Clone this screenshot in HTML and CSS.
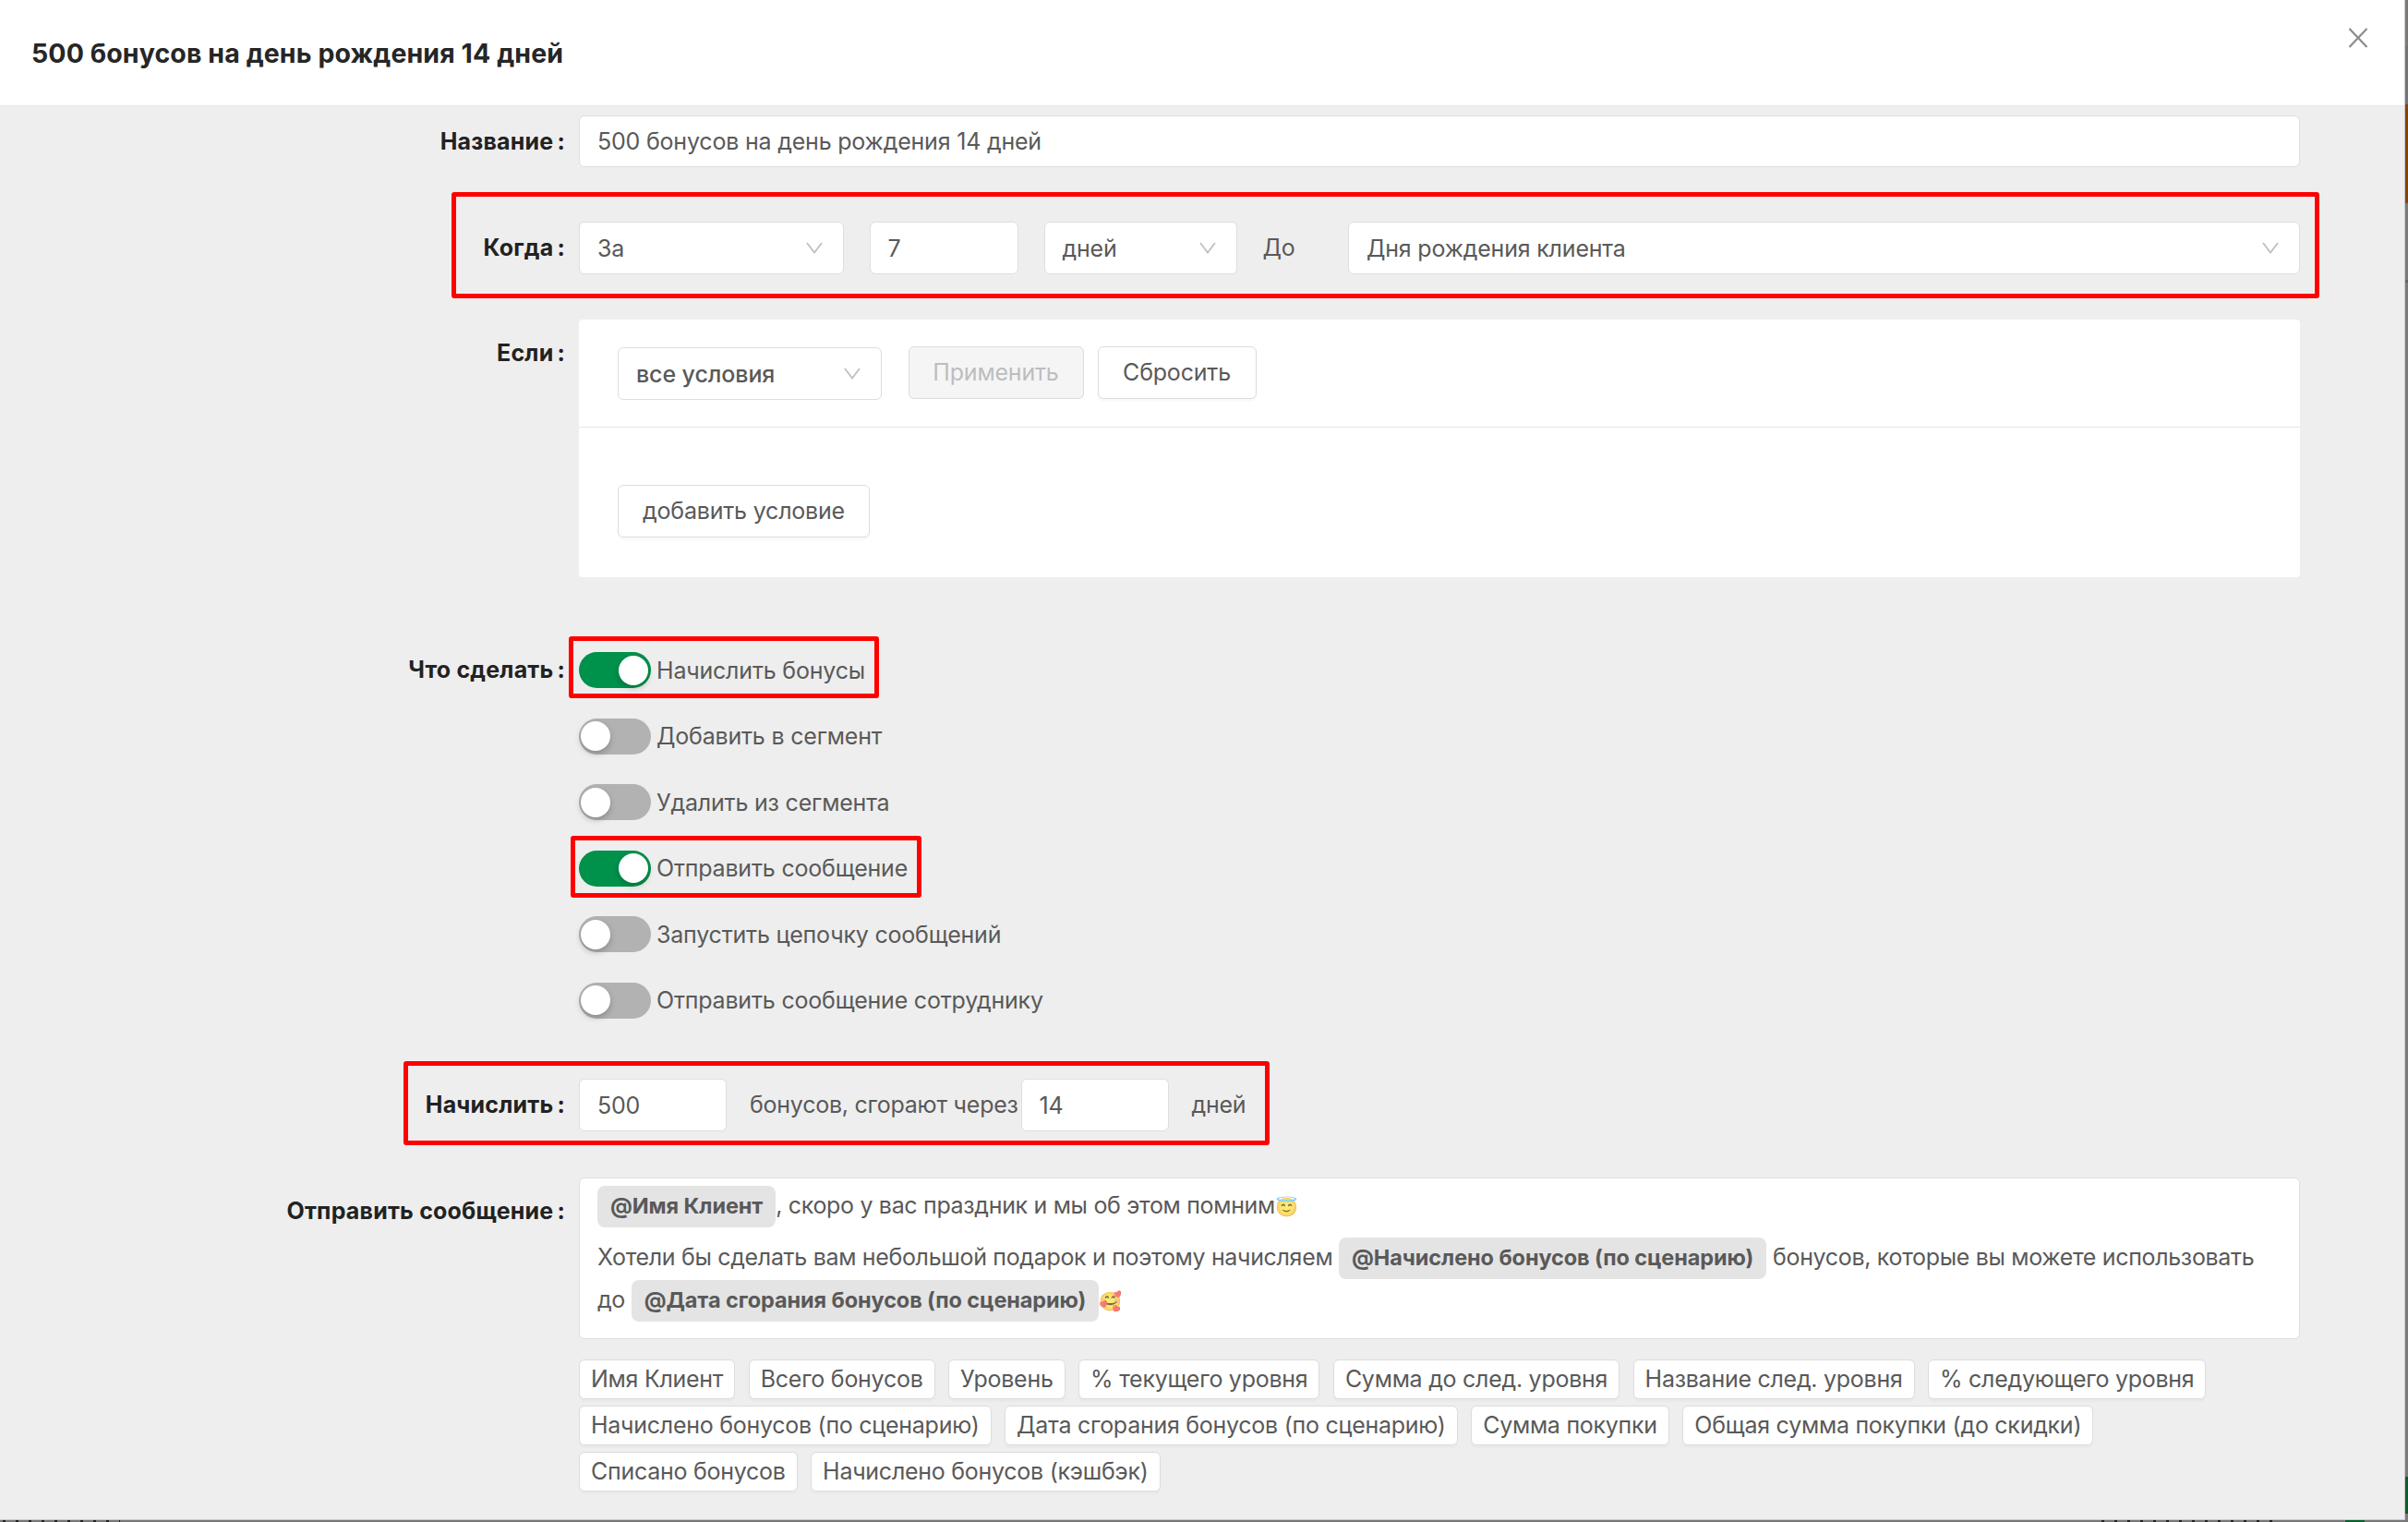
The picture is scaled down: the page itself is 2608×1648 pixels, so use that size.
FILE: index.html
```
<!DOCTYPE html>
<html lang="ru">

<head>
    <meta charset="utf-8">
    <title>500 бонусов на день рождения 14 дней</title>
    <link rel="stylesheet" href="styles.css">
</head>

<body>
    <svg class="sprite" width="0" height="0">
        <symbol id="down" viewBox="0 0 18 13">
            <path d="M1 1 L9 11.5 L17 1" fill="none" stroke="#bfbfbf" stroke-width="1.8" />
        </symbol>
    </svg>

    <div class="page">
        <div class="drawer">
            <div class="drawer-header">
                <h1>500 бонусов на день рождения 14 дней</h1>
                <svg class="close" width="22" height="22" viewBox="0 0 22 22">
                    <path d="M1.5 1 L20.5 21 M20.5 1 L1.5 21" fill="none" stroke="#8c8c8c" stroke-width="2.2" />
                </svg>
            </div>

            <div class="form">
                <div class="row row-name">
                    <div class="label">Название<i>:</i></div>
                    <div class="field input">500 бонусов на день рождения 14 дней</div>
                </div>

                <div class="row row-when">
                    <div class="label">Когда<i>:</i></div>
                    <div class="field when">
                        <div class="input">За<svg class="arrow"><use href="#down" /></svg></div>
                        <div class="input">7</div>
                        <div class="input">дней<svg class="arrow"><use href="#down" /></svg></div>
                        <div class="text">До</div>
                        <div class="input">Дня рождения клиента<svg class="arrow"><use href="#down" /></svg></div>
                    </div>
                    <div class="mark mark-when"></div>
                </div>

                <div class="row row-if">
                    <div class="label label-low">Если<i>:</i></div>
                    <div class="field panel">
                        <div class="panel-head">
                            <div class="input medium">все условия<svg class="arrow"><use href="#down" /></svg></div>
                            <div class="btn disabled">Применить</div>
                            <div class="btn reset">Сбросить</div>
                        </div>
                        <div class="panel-body">
                            <div class="btn add">добавить условие</div>
                        </div>
                    </div>
                </div>

                <div class="row row-do">
                    <div class="label">Что сделать<i>:</i></div>
                    <div class="field switches">
                        <div class="switch-line"><span class="switch on"></span>Начислить бонусы<div class="mark mark-bonus"></div></div>
                        <div class="switch-line"><span class="switch"></span>Добавить в сегмент</div>
                        <div class="switch-line"><span class="switch"></span>Удалить из сегмента</div>
                        <div class="switch-line"><span class="switch on"></span>Отправить сообщение<div class="mark mark-send"></div></div>
                        <div class="switch-line"><span class="switch"></span>Запустить цепочку сообщений</div>
                        <div class="switch-line"><span class="switch"></span>Отправить сообщение сотруднику</div>
                    </div>
                </div>

                <div class="row row-add">
                    <div class="label">Начислить<i>:</i></div>
                    <div class="field amount">
                        <div class="input">500</div>
                        <div class="text">бонусов, сгорают через</div>
                        <div class="input">14</div>
                        <div class="text">дней</div>
                    </div>
                    <div class="mark mark-add"></div>
                </div>

                <div class="row row-message">
                    <div class="label label-low">Отправить сообщение<i>:</i></div>
                    <div class="field">
                        <div class="message">
                            <p><span class="chip">@Имя Клиент</span>, скоро у вас праздник и мы об этом помним<span class="emoji">😇</span></p>
                            <p>Хотели бы сделать вам небольшой подарок и поэтому начисляем <span class="chip">@Начислено бонусов (по сценарию)</span> бонусов, которые вы можете использовать<br>до <span class="chip">@Дата сгорания бонусов (по сценарию)</span><span class="emoji">🥰</span></p>
                        </div>
                        <div class="tags">
                            <div class="btn small">Имя Клиент</div>
                            <div class="btn small">Всего бонусов</div>
                            <div class="btn small">Уровень</div>
                            <div class="btn small">% текущего уровня</div>
                            <div class="btn small">Сумма до след. уровня</div>
                            <div class="btn small">Название след. уровня</div>
                            <div class="btn small">% следующего уровня</div>
                            <div class="btn small">Начислено бонусов (по сценарию)</div>
                            <div class="btn small">Дата сгорания бонусов (по сценарию)</div>
                            <div class="btn small">Сумма покупки</div>
                            <div class="btn small">Общая сумма покупки (до скидки)</div>
                            <div class="btn small">Списано бонусов</div>
                            <div class="btn small">Начислено бонусов (кэшбэк)</div>
                        </div>
                    </div>
                </div>
            </div>
        </div>

        <!-- page edge behind the drawer -->
        <div class="edge">
            <div class="edge-top"></div>
            <div class="edge-orange"></div>
            <div class="edge-gray"></div>
            <div class="edge-green"></div>
        </div>
    </div>
    <div class="under">
        <span class="dots dots-left"></span>
        <span class="dots dots-right"></span>
        <span class="under-green"></span>
    </div>
</body>

</html>
```
FILE: styles.css
```
* {
    box-sizing: border-box;
}

body {
    margin: 0;
    width: 2608px;
    height: 1648px;
    overflow: hidden;
    background: #777;
    font-family: Inter, "Noto Sans", sans-serif;
    font-size: 25px;
    letter-spacing: -0.2px;
    color: #595959;
}

.sprite {
    position: absolute;
}

.page {
    display: flex;
    height: 1646px;
}

.drawer {
    flex: 1;
    background: #eee;
    border-right: 1px solid #c8c8c8;
    border-bottom: 1px solid #c8c8c8;
}

.drawer-header {
    display: flex;
    justify-content: space-between;
    height: 115px;
    padding: 0 39px 0 34px;
    background: #fff;
    border-bottom: 1px solid #e8e8e8;
}

h1 {
    margin: 0;
    font-size: 28.5px;
    font-weight: 650;
    line-height: 116px;
    letter-spacing: 0.1px;
    color: #262626;
}

.close {
    margin-top: 30px;
}

.form {
    padding-top: 10px;
}

.row {
    display: flex;
    position: relative;
}

.row-name {
    margin-bottom: 58px;
}

.row-when {
    margin-bottom: 49px;
}

.row-if {
    margin-bottom: 72px;
}

.row-do {
    margin-bottom: 33px;
}

.row-add {
    margin-bottom: 50px;
}

.label {
    width: 627px;
    height: 57px;
    padding-right: 15px;
    text-align: right;
    line-height: 57px;
    font-weight: 650;
    letter-spacing: 0.2px;
    color: #222;
}

.label-low {
    padding-top: 8px;
}

.label i {
    font-style: normal;
    margin-left: 4px;
}

.field {
    width: 1864px;
}

.input {
    display: flex;
    justify-content: space-between;
    align-items: center;
    height: 57px;
    padding: 0 22px 0 19px;
    background: #fff;
    border: 1.5px solid #dedede;
    border-radius: 6px;
    line-height: 54px;
    white-space: nowrap;
}

.row-name .input {
    height: 56px;
}

.arrow {
    width: 18px;
    height: 13px;
}

.medium {
    width: 286px;
    margin-right: 28.5px;
    font-weight: 500;
    letter-spacing: -0.1px;
}

.when {
    display: grid;
    grid-template-columns: 286.5px 161px 209px 64.5px 1031px;
    column-gap: 28px;
}

.text {
    line-height: 57px;
    white-space: nowrap;
}

.mark {
    position: absolute;
    border: 5.5px solid #f00;
    border-radius: 3px;
}

.mark-when {
    left: 489px;
    top: -32px;
    width: 2023px;
    height: 115px;
}

.mark-bonus {
    left: -11px;
    top: -17px;
    width: 336px;
    height: 67px;
}

.mark-send {
    left: -9px;
    top: -16px;
    width: 380px;
    height: 67px;
}

.mark-add {
    left: 437px;
    top: -19px;
    width: 938px;
    height: 91px;
}

.panel {
    height: 279px;
    background: #fff;
    border-radius: 4px;
}

.panel-head {
    display: flex;
    height: 117px;
    padding: 29px 42px;
    border-bottom: 1.5px solid #e6e6e6;
}

.panel-head .input {
    margin-top: 1px;
    line-height: 52px;
}

.panel-body {
    padding: 62px 42px;
}

.btn {
    height: 57px;
    background: #fff;
    border: 1.5px solid #dcdcdc;
    border-radius: 6px;
    box-shadow: 0 3px 0 rgba(0, 0, 0, 0.02);
    line-height: 55px;
    text-align: center;
    white-space: nowrap;
}

.disabled {
    width: 190px;
    margin-right: 15px;
    background: #f5f5f5;
    box-shadow: none;
    color: #bdbdbd;
}

.reset {
    width: 172px;
}

.add {
    width: 273px;
}

.switches {
    padding-top: 9px;
}

.switch-line {
    display: flex;
    align-items: center;
    position: relative;
    height: 39px;
    margin-bottom: 32.5px;
}

.switch {
    width: 78px;
    height: 39px;
    margin-right: 6px;
    padding: 3.5px 2px;
    background: #b2b2b2;
    border-radius: 20px;
}

.switch::before {
    content: "";
    display: block;
    width: 32px;
    height: 32px;
    background: #fff;
    border-radius: 50%;
    box-shadow: 0 3px 6px rgba(0, 35, 11, 0.25);
}

.switch.on {
    background: #00914b;
}

.switch.on::before {
    margin-left: 41px;
}

.amount {
    display: flex;
}

.amount .input {
    width: 160px;
}

.amount .text {
    width: 318.5px;
    padding-left: 25px;
    letter-spacing: -0.25px;
}

.message {
    height: 175px;
    padding: 7px 19px;
    background: #fff;
    border: 1.5px solid #dedede;
    border-radius: 6px;
    white-space: nowrap;
}

.message p {
    margin: 0 0 10px;
    line-height: 44px;
    letter-spacing: -0.33px;
}

.chip {
    display: inline-block;
    height: 45px;
    padding: 0 14px;
    background: #e4e4e4;
    border-radius: 8px;
    font-size: 23.5px;
    font-weight: 650;
    line-height: 43px;
    letter-spacing: -0.1px;
}

.emoji {
    font-size: 20px;
    line-height: 20px;
    opacity: 0.7;
}

.tags {
    display: flex;
    flex-wrap: wrap;
    gap: 7.5px 14.5px;
    margin-top: 22px;
    letter-spacing: -0.27px;
}

.small {
    height: 42.5px;
    padding: 0 12px;
    line-height: 41px;
}

.edge {
    width: 3px;
    display: flex;
    flex-direction: column;
}

.edge-top {
    height: 113px;
    background: linear-gradient(#7c7875 51px, #8a6565 51px, #8a6565 52px, #757575 52px);
}

.edge-orange {
    height: 107px;
    background: #864500;
}

.edge-gray {
    flex: 1;
    background: linear-gradient(#7b7b7b 83px, #666 83px, #666 86px, #7b7b7b 86px);
}

.edge-green {
    height: 47px;
    background: linear-gradient(#0b5d2c 40px, #7b7b7b 40px);
}

/* tops of the letters that stick out under the drawer */
.under {
    display: flex;
    height: 2px;
}

.dots {
    height: 2px;
    background: repeating-linear-gradient(90deg, #777 0 3px, #222 3px 6px, #777 6px 14px);
}

.dots-left {
    width: 130px;
}

.dots-right {
    width: 190px;
    margin-left: 2143px;
}

.under-green {
    width: 21px;
    margin-left: 77px;
    background: #0b5d2c;
}
```
